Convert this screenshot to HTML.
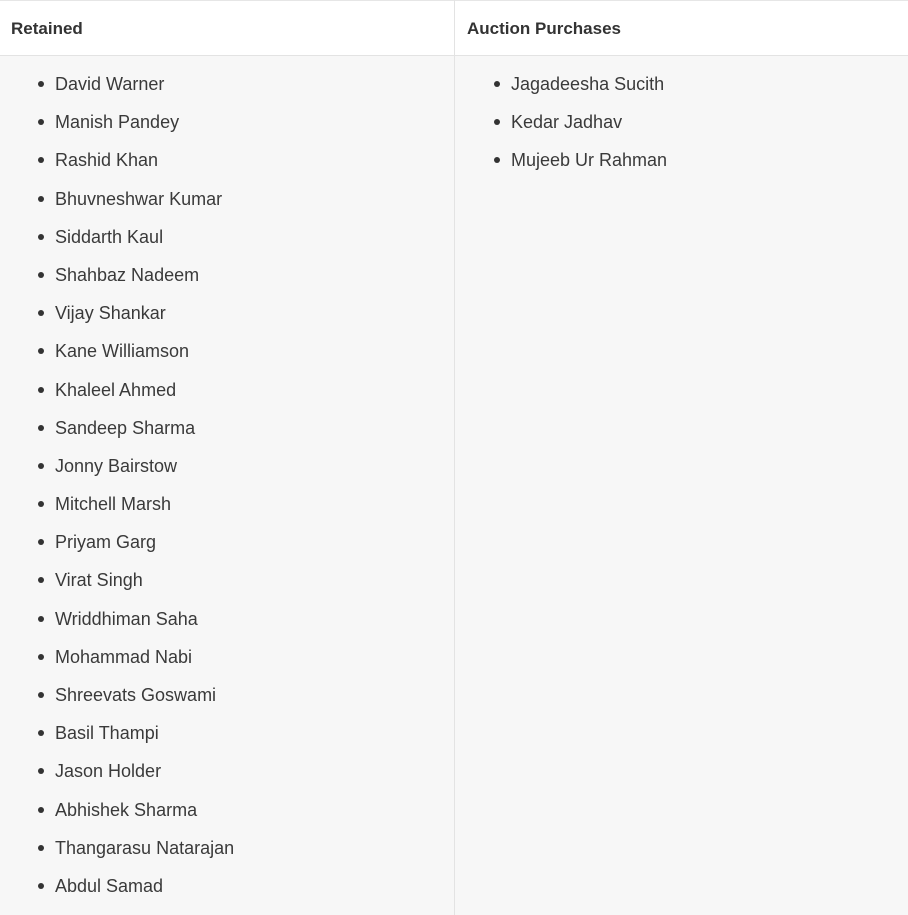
<!DOCTYPE html>
<html><head><style>
body{margin:0;width:908px;height:915px;background:#f7f7f7;font-family:"Liberation Sans",sans-serif;color:#333;overflow:hidden;position:relative}
.top{position:absolute;left:0;top:0;width:908px;height:56px;background:#fff;border-top:1px solid #e6e6e6;border-bottom:1px solid #e3e3e3;box-sizing:border-box}
.h{position:absolute;top:19px;font-size:17px;font-weight:bold;color:#333}
.div{position:absolute;left:454px;top:0;width:1px;height:915px;background:#e3e3e3}
ul{position:absolute;margin:0;padding:0;list-style:none;top:65px;font-size:18px;color:#3a3a3a}
li{height:38.2px;line-height:38.2px;position:relative;white-space:nowrap}
li:before{content:"";position:absolute;left:-17px;top:16px;width:6px;height:6px;border-radius:50%;background:#333}
</style></head><body>
<div class="top"></div>
<div class="h" style="left:11px">Retained</div>
<div class="h" style="left:467px">Auction Purchases</div>
<div class="div"></div>
<ul style="left:55px">
<li>David Warner</li><li>Manish Pandey</li><li>Rashid Khan</li><li>Bhuvneshwar Kumar</li><li>Siddarth Kaul</li><li>Shahbaz Nadeem</li><li>Vijay Shankar</li><li>Kane Williamson</li><li>Khaleel Ahmed</li><li>Sandeep Sharma</li><li>Jonny Bairstow</li><li>Mitchell Marsh</li><li>Priyam Garg</li><li>Virat Singh</li><li>Wriddhiman Saha</li><li>Mohammad Nabi</li><li>Shreevats Goswami</li><li>Basil Thampi</li><li>Jason Holder</li><li>Abhishek Sharma</li><li>Thangarasu Natarajan</li><li>Abdul Samad</li>
</ul>
<ul style="left:511px">
<li>Jagadeesha Sucith</li><li>Kedar Jadhav</li><li>Mujeeb Ur Rahman</li>
</ul>
</body></html>
